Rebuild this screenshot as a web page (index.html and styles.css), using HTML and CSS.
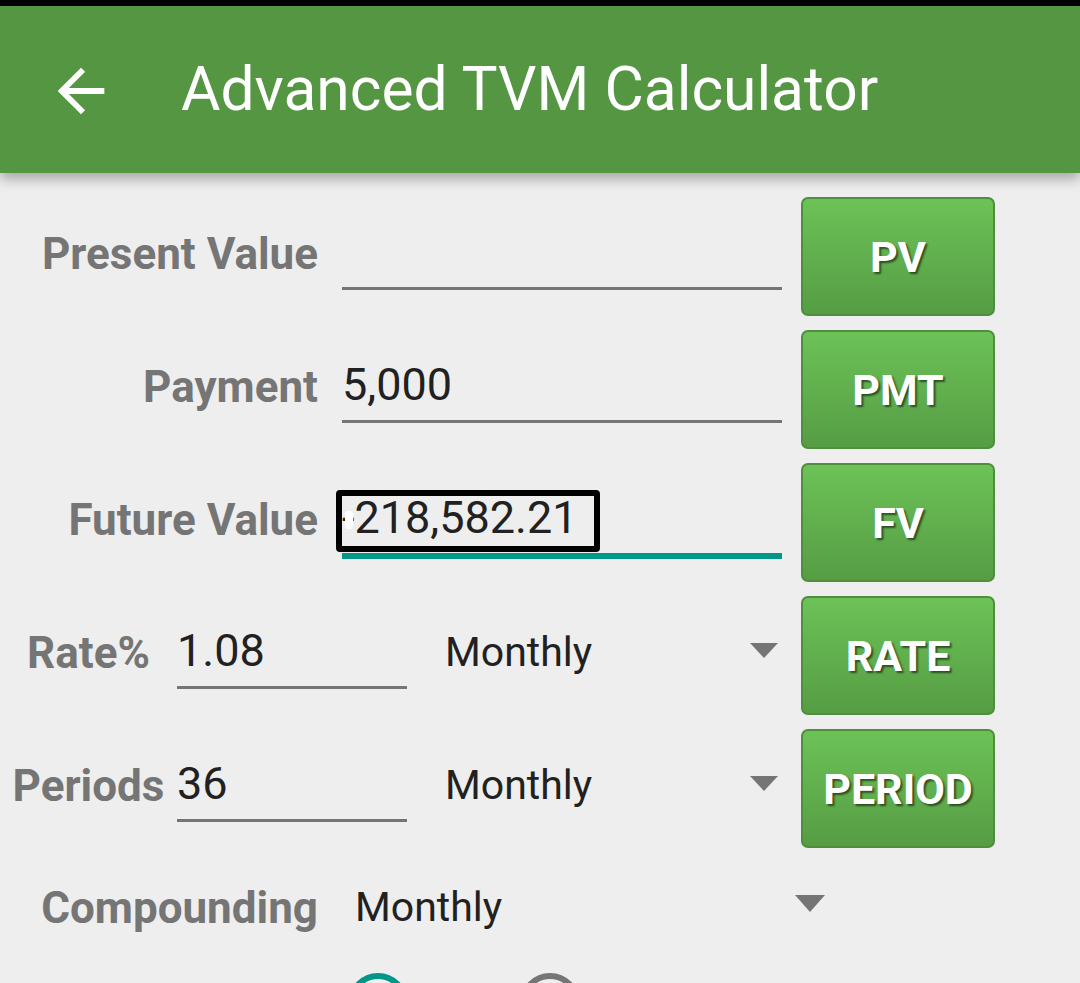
FILE: index.html
```html
<!DOCTYPE html>
<html lang="en">
<head>
  <meta charset="UTF-8" />
  <meta name="viewport" content="width=device-width, initial-scale=1" />
  <title>Advanced TVM Calculator</title>
  <link rel="stylesheet" href="styles.css">
</head>
<body>
  <div class="statusbar"></div>
  <div class="toolbar">
    <svg class="back" viewBox="0 0 24 24" width="70" height="70">
      <path d="M20 11H7.83l5.59-5.59L12 4l-8 8 8 8 1.41-1.41L7.83 13H20v-2z" fill="#fff"/>
    </svg>
    <h1 class="title">Advanced TVM Calculator</h1>
  </div>

  <div class="content">
    <div class="row">
      <div class="label">Present Value</div>
      <div class="field"></div>
      <button class="calc">PV</button>
    </div>

    <div class="row">
      <div class="label">Payment</div>
      <div class="field">5,000</div>
      <button class="calc">PMT</button>
    </div>

    <div class="row">
      <div class="label">Future Value</div>
      <div class="field focused">
        -218,582.21
        <span class="handle"></span>
        <span class="highlight"></span>
      </div>
      <button class="calc">FV</button>
    </div>

    <div class="row">
      <div class="label short">Rate%</div>
      <div class="field narrow">1.08</div>
      <div class="spinner"><span>Monthly</span><i class="arrow"></i></div>
      <button class="calc">RATE</button>
    </div>

    <div class="row">
      <div class="label short">Periods</div>
      <div class="field narrow">36</div>
      <div class="spinner"><span>Monthly</span><i class="arrow"></i></div>
      <button class="calc">PERIOD</button>
    </div>

    <div class="row compounding">
      <div class="label">Compounding</div>
      <div class="spinner wide"><span>Monthly</span><i class="arrow"></i></div>
    </div>

    <div class="radios">
      <span class="radio checked"></span>
      <span class="radio"></span>
    </div>
  </div>
</body>
</html>
```

FILE: styles.css
```css
body {
  margin: 0;
  background: #eeeeee;
  font-family: Roboto, 'Noto Sans', sans-serif;
  overflow: hidden;
  height: 983px;
}

.statusbar {
  height: 6px;
  background: #000;
}

.toolbar {
  display: flex;
  align-items: center;
  height: 167px;
  background: #559642;
  box-shadow: 0 6px 12px rgba(0, 0, 0, 0.3);
  position: relative;
  z-index: 1;
}

.back {
  margin-left: 46px;
  margin-top: 2px;
}

.title {
  margin: 0 0 0 65px;
  font-size: 60.5px;
  font-weight: normal;
  color: #fff;
}

.content {
  padding-top: 24px;
}

.row {
  display: flex;
  align-items: flex-start;
  height: 119px;
  margin-bottom: 14px;
}

.label {
  width: 318px;
  flex-shrink: 0;
  padding-top: 35px;
  text-align: right;
  font-size: 44px;
  font-weight: bold;
  line-height: 1;
  color: #757575;
}

.label.short {
  width: 177px;
  text-align: center;
}

.field {
  position: relative;
  flex-shrink: 0;
  width: 440px;
  height: 93px;
  margin-left: 24px;
  padding-top: 32px;
  box-sizing: border-box;
  border-bottom: 3px solid #757575;
  font-size: 45px;
  line-height: 1;
  color: #212121;
}

.field.narrow {
  width: 230px;
  margin-left: 0;
}

.field.focused {
  height: 96px;
  border-bottom: 6px solid #009688;
}

.handle {
  position: absolute;
  left: 3px;
  top: 48px;
  width: 8px;
  height: 18px;
  border-radius: 4px 4px 5px 5px;
  background: #fff;
}

.highlight {
  position: absolute;
  left: -6px;
  top: 27px;
  width: 264px;
  height: 62px;
  box-sizing: border-box;
  border: 6px solid #000;
  border-radius: 4px;
}

.spinner {
  display: flex;
  justify-content: space-between;
  align-items: flex-start;
  flex-shrink: 0;
  width: 375px;
  padding: 36px 4px 0 38px;
  box-sizing: border-box;
  font-size: 41px;
  line-height: 1;
  color: #212121;
}

.spinner .arrow {
  margin-top: 11px;
  border-left: 14px solid transparent;
  border-right: 14px solid transparent;
  border-top: 15px solid #757575;
}

.spinner.wide {
  width: 483px;
  margin-left: 24px;
  padding: 25px 0 0 13px;
}

.spinner.wide .arrow {
  margin-top: 8px;
  border-left-width: 15px;
  border-right-width: 15px;
  border-top-width: 17px;
}

.calc {
  flex-shrink: 0;
  width: 194px;
  height: 119px;
  margin-left: 19px;
  border: 2px solid #4f8e3d;
  border-radius: 7px;
  background: linear-gradient(#6cc257, #569d44);
  font-family: Roboto, 'Noto Sans', sans-serif;
  font-size: 43px;
  font-weight: bold;
  color: #fff;
  text-shadow: 2px 2px 2px rgba(0, 0, 0, 0.55);
  padding: 0;
}

.compounding {
  height: 111px;
  margin-bottom: 0;
}

.compounding .label {
  padding-top: 24px;
}

.radios {
  display: flex;
  gap: 112px;
  padding-left: 348px;
}

.radio {
  width: 60px;
  height: 60px;
  box-sizing: border-box;
  border: 6px solid #757575;
  border-radius: 50%;
}

.radio.checked {
  border-color: #009688;
}
```
